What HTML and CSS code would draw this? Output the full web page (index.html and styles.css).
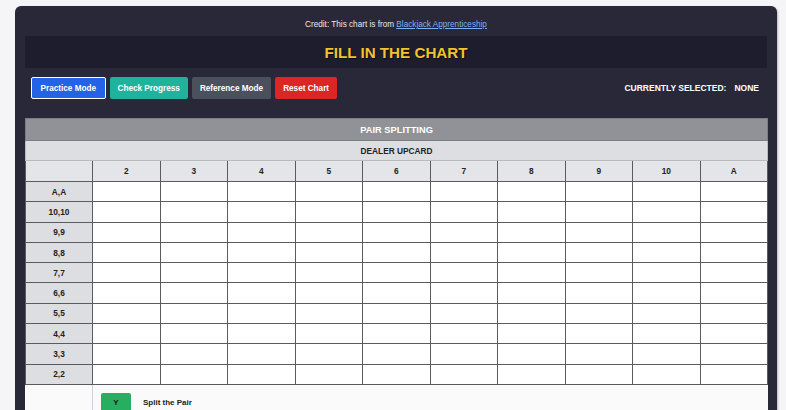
FILE: index.html
```html
<!DOCTYPE html>
<html>
<head>
<meta charset="utf-8">
<link rel="stylesheet" href="styles.css">
</head>
<body>
<div class="app">
  <div class="credit">Credit: This chart is from <a href="#">Blackjack Apprenticeship</a></div>
  <div class="title-bar"><h1>FILL IN THE CHART</h1></div>
  <div class="controls">
    <div class="buttons">
      <button class="btn btn-blue active">Practice Mode</button>
      <button class="btn btn-teal">Check Progress</button>
      <button class="btn btn-gray">Reference Mode</button>
      <button class="btn btn-red">Reset Chart</button>
    </div>
    <div class="selected"><span>CURRENTLY SELECTED:</span><span>NONE</span></div>
  </div>
  <table class="chart">
    <colgroup><col class="c-label"><col><col><col><col><col><col><col><col><col><col></colgroup>
    <tr class="r-title"><th colspan="11">PAIR SPLITTING</th></tr>
    <tr class="r-dealer"><th colspan="11">DEALER UPCARD</th></tr>
    <tr class="r-head"><th></th><th>2</th><th>3</th><th>4</th><th>5</th><th>6</th><th>7</th><th>8</th><th>9</th><th>10</th><th>A</th></tr>
    <tr><th>A,A</th><td></td><td></td><td></td><td></td><td></td><td></td><td></td><td></td><td></td><td></td></tr>
    <tr><th>10,10</th><td></td><td></td><td></td><td></td><td></td><td></td><td></td><td></td><td></td><td></td></tr>
    <tr><th>9,9</th><td></td><td></td><td></td><td></td><td></td><td></td><td></td><td></td><td></td><td></td></tr>
    <tr><th>8,8</th><td></td><td></td><td></td><td></td><td></td><td></td><td></td><td></td><td></td><td></td></tr>
    <tr><th>7,7</th><td></td><td></td><td></td><td></td><td></td><td></td><td></td><td></td><td></td><td></td></tr>
    <tr><th>6,6</th><td></td><td></td><td></td><td></td><td></td><td></td><td></td><td></td><td></td><td></td></tr>
    <tr><th>5,5</th><td></td><td></td><td></td><td></td><td></td><td></td><td></td><td></td><td></td><td></td></tr>
    <tr><th>4,4</th><td></td><td></td><td></td><td></td><td></td><td></td><td></td><td></td><td></td><td></td></tr>
    <tr><th>3,3</th><td></td><td></td><td></td><td></td><td></td><td></td><td></td><td></td><td></td><td></td></tr>
    <tr><th>2,2</th><td></td><td></td><td></td><td></td><td></td><td></td><td></td><td></td><td></td><td></td></tr>
    <tr class="r-legend">
      <td class="legend-blank"></td>
      <td colspan="10" class="legend-cell">
        <div class="legend"><span class="badge">Y</span><span class="legend-text">Split the Pair</span></div>
      </td>
    </tr>
  </table>
</div>
</body>
</html>
```

FILE: styles.css
```css
html, body {
  margin: 0;
  padding: 0;
  background: #f5f5f7;
  font-family: "Liberation Sans", Arial, sans-serif;
  overflow: hidden;
}

.app {
  width: 742px;
  margin: 6px 0 0 15px;
  padding: 14px 10px 40px;
  background: #282839;
  border-radius: 6px;
  box-shadow: 1px 1px 2px rgba(0, 0, 0, 0.25);
}

.credit {
  text-align: center;
  color: #e8e8ee;
  font-size: 8.2px;
  line-height: 10px;
  height: 10px;
}

.credit a {
  color: #7ab0f5;
}

.title-bar {
  margin-top: 6px;
  height: 32px;
  background: #1d1d2d;
  display: flex;
  align-items: center;
  justify-content: center;
}

.title-bar h1 {
  margin: 0;
  font-size: 15.2px;
  font-weight: bold;
  color: #f2c230;
  text-shadow: 1px 1px 1px rgba(0, 0, 0, 0.6);
}

.controls {
  margin-top: 9px;
  padding-left: 6px;
  padding-right: 8px;
  display: flex;
  align-items: center;
  justify-content: space-between;
}

.buttons {
  display: flex;
  gap: 4px;
}

.btn {
  height: 22px;
  padding: 0 7px;
  border: 1px solid transparent;
  border-radius: 2px;
  font-family: "Liberation Sans", Arial, sans-serif;
  font-size: 8.2px;
  font-weight: bold;
  color: #ffffff;
  white-space: nowrap;
  cursor: pointer;
}

.btn-blue { background: #2463e6; padding: 0 8.5px; }
.btn-blue.active { border-color: #ffffff; }
.btn-teal { background: #1fb29c; }
.btn-gray { background: #4a505c; }
.btn-red { background: #dc2626; }

.selected {
  display: flex;
  gap: 8px;
  color: #ffffff;
  font-size: 8.5px;
  font-weight: bold;
}

.chart {
  margin-top: 19px;
  width: 742px;
  border-collapse: collapse;
  table-layout: fixed;
  background: #ffffff;
}

.chart col { width: 67.5px; }
.chart col.c-label { width: 67px; }

.chart th, .chart td {
  padding: 0;
  border: 1px solid #5a5a60;
  font-size: 8.3px;
  font-weight: bold;
  color: #222;
  text-align: center;
}

.chart td { height: 19.3px; background: #ffffff; }
.chart tr > th:first-child { background: #dcdee2; }

.r-title th {
  height: 21px;
  background: #909298 !important;
  color: #ffffff;
  font-size: 9.3px;
  border-color: #7c7e84;
}

.r-dealer th {
  height: 19px;
  background: #dcdee2 !important;
  border-color: #b8babe;
}

.r-head th {
  height: 20px;
  background: #e3e5e9 !important;
}

.r-legend td {
  background: #fafafa;
  border: none;
  height: 40px;
  vertical-align: top;
}

.r-legend .legend-blank {
  border-right: 1px solid #d0d0d4;
}

.legend {
  display: flex;
  align-items: center;
  padding: 8px 0 0 8px;
}

.badge {
  width: 30px;
  height: 20px;
  background: #27ae60;
  border-radius: 2px;
  display: flex;
  align-items: center;
  justify-content: center;
  font-size: 8px;
  color: #1a1a1a;
}

.legend-text {
  margin-left: 12px;
  font-size: 8px;
  color: #222;
  text-align: left;
}
```
